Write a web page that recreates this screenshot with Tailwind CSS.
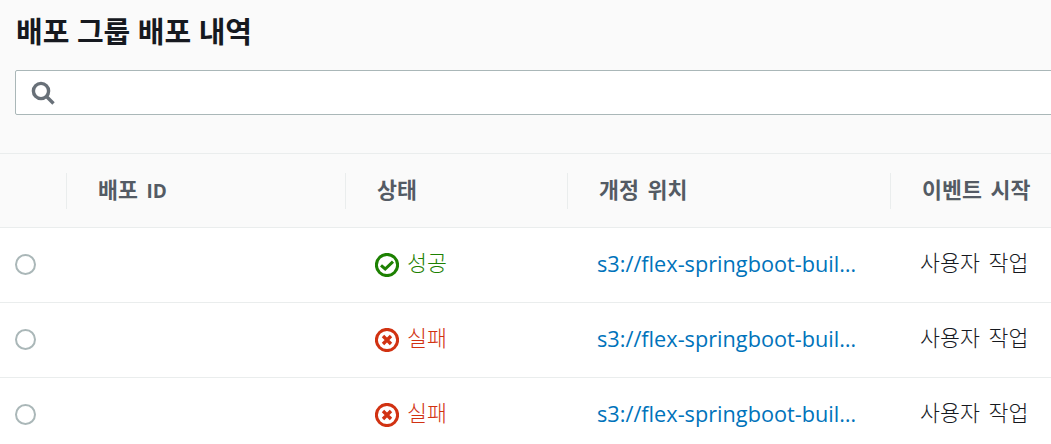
<!doctype html>
<html lang="ko">
<head>
<meta charset="utf-8">
<script src="https://cdn.jsdelivr.net/npm/@tailwindcss/browser@4"></script>
</head>
<body class="bg-white overflow-hidden">
<div class="w-[1051px] h-[444px] overflow-hidden font-['Open_Sans','Noto_Sans_CJK_KR',sans-serif] text-[21.7px] text-[#16191f]">
  <div class="bg-[#fafafa] h-[153px] pt-[14px] pl-[16px]">
    <h2 class="text-[29px] leading-[36px] font-bold text-[#16191f] h-[36px]">배포 그룹 배포 내역</h2>
    <div class="mt-[20px] ml-[-1px] w-[1100px] h-[45px] bg-white border border-[#aab7b8] rounded-[2px] flex items-center pl-[15px]">
      <svg class="w-[24px] h-[24px] text-[#687078]" viewBox="0 0 24 24" fill="none" stroke="currentColor" stroke-width="3.4"><circle cx="10" cy="10" r="7.6"/><path d="M15.5 15.5 22.5 22.5"/></svg>
    </div>
  </div>
  <div class="grid grid-cols-[67px_279px_222px_323px_1fr] h-[75px] bg-[#fafafa] border-y border-[#eaeded] items-center font-bold text-[#545b64] [word-spacing:3px]">
    <div class="h-[36px] border-r border-[#eaeded]"></div>
    <div class="h-[36px] border-r border-[#eaeded] pl-[31px] leading-[34px]">배포 <span class="text-[19px]">ID</span></div>
    <div class="h-[36px] border-r border-[#eaeded] pl-[31px] leading-[34px]">상태</div>
    <div class="h-[36px] border-r border-[#eaeded] pl-[31px] leading-[34px]">개정 위치</div>
    <div class="h-[36px] pl-[31px] leading-[34px] whitespace-nowrap">이벤트 시작</div>
  </div>
  <div class="grid grid-cols-[67px_279px_222px_323px_1fr] h-[75px] border-b border-[#eaeded] items-center">
    <div class="pl-[15px] mb-[2px]"><div class="w-[21px] h-[21px] rounded-full border-2 border-[#aab7b8] bg-white"></div></div>
    <div></div>
    <div class="pl-[29px] flex items-center gap-[8px] text-[#1d8102]">
      <svg class="w-[24px] h-[24px] shrink-0" viewBox="0 0 24 24" fill="none" stroke="currentColor"><circle cx="12" cy="12" r="10.6" stroke-width="3"/><path d="M6 12.3 10.2 16 18 8.7" stroke-width="3"/></svg>
      <span class="font-light leading-[28px] mb-[4px]">성공</span>
    </div>
    <a class="pl-[29px] text-[#0073bb] whitespace-nowrap mb-[2px]">s3://flex-springboot-buil…</a>
    <div class="pl-[29px] whitespace-nowrap font-light leading-[28px] mb-[4px] [word-spacing:3px]">사용자 작업</div>
  </div>
  <div class="grid grid-cols-[67px_279px_222px_323px_1fr] h-[75px] border-b border-[#eaeded] items-center">
    <div class="pl-[15px] mb-[2px]"><div class="w-[21px] h-[21px] rounded-full border-2 border-[#aab7b8] bg-white"></div></div>
    <div></div>
    <div class="pl-[29px] flex items-center gap-[8px] text-[#d13212]">
      <svg class="w-[24px] h-[24px] shrink-0" viewBox="0 0 24 24" fill="none" stroke="currentColor"><circle cx="12" cy="12" r="10.6" stroke-width="3"/><path d="M8 8l8 8M16 8l-8 8" stroke-width="3.4"/></svg>
      <span class="font-light leading-[28px] mb-[4px]">실패</span>
    </div>
    <a class="pl-[29px] text-[#0073bb] whitespace-nowrap mb-[2px]">s3://flex-springboot-buil…</a>
    <div class="pl-[29px] whitespace-nowrap font-light leading-[28px] mb-[4px] [word-spacing:3px]">사용자 작업</div>
  </div>
  <div class="grid grid-cols-[67px_279px_222px_323px_1fr] h-[75px] border-b border-[#eaeded] items-center">
    <div class="pl-[15px] mb-[2px]"><div class="w-[21px] h-[21px] rounded-full border-2 border-[#aab7b8] bg-white"></div></div>
    <div></div>
    <div class="pl-[29px] flex items-center gap-[8px] text-[#d13212]">
      <svg class="w-[24px] h-[24px] shrink-0" viewBox="0 0 24 24" fill="none" stroke="currentColor"><circle cx="12" cy="12" r="10.6" stroke-width="3"/><path d="M8 8l8 8M16 8l-8 8" stroke-width="3.4"/></svg>
      <span class="font-light leading-[28px] mb-[4px]">실패</span>
    </div>
    <a class="pl-[29px] text-[#0073bb] whitespace-nowrap mb-[2px]">s3://flex-springboot-buil…</a>
    <div class="pl-[29px] whitespace-nowrap font-light leading-[28px] mb-[4px] [word-spacing:3px]">사용자 작업</div>
  </div>
</div>
</body>
</html>
